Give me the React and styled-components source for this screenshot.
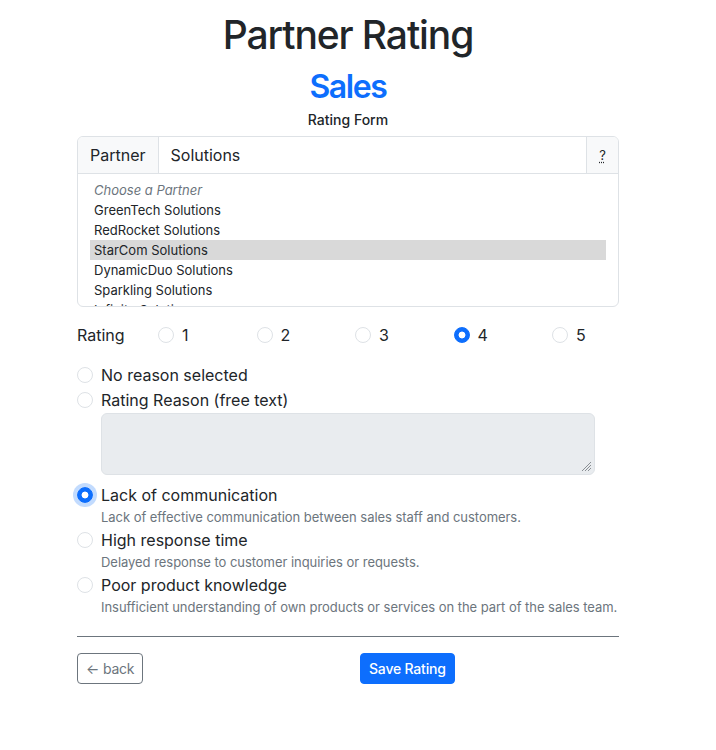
import React from "react";
import styled, { createGlobalStyle } from "styled-components";

const GlobalStyle = createGlobalStyle`
  body {
    margin: 0;
    background: #fff;
    color: #212529;
    font-family: Inter, "Noto Sans", "Liberation Sans", sans-serif;
  }
`;

const Page = styled.div`
  width: 542px;
  padding: 11px 0 40px 77px;
`;

const Title = styled.h1`
  margin: 0;
  text-align: center;
  font-size: 39px;
  font-weight: 500;
  line-height: 48px;
  letter-spacing: -1.1px;
`;

const Subtitle = styled.h2`
  margin: 9px 0 0;
  text-align: center;
  font-size: 32px;
  font-weight: 600;
  line-height: 38px;
  letter-spacing: -1.4px;
  color: #0d6efd;
`;

const FormTitle = styled.div`
  margin-top: 5px;
  text-align: center;
  font-size: 14px;
  font-weight: 500;
  line-height: 18px;
`;

const PartnerBox = styled.div`
  margin-top: 7px;
  border: 1px solid #dee2e6;
  border-radius: 6px;
  overflow: hidden;
`;

const SearchRow = styled.div`
  display: flex;
  height: 36px;
  border-bottom: 1px solid #dee2e6;
`;

const Addon = styled.span`
  display: flex;
  align-items: center;
  padding: 0 12px;
  background: #f8f9fa;
  border-right: 1px solid #dee2e6;
  font-size: 16px;
`;

const SearchInput = styled.div`
  flex: 1;
  display: flex;
  align-items: center;
  padding: 0 12px;
  font-size: 16px;
`;

const HelpButton = styled.span`
  width: 31px;
  display: flex;
  align-items: center;
  justify-content: center;
  background: #f8f9fa;
  border-left: 1px solid #dee2e6;
  font-size: 13px;

  abbr {
    text-decoration: underline dotted;
    text-underline-offset: 2px;
  }
`;

const OptionList = styled.div`
  height: 126px;
  overflow: hidden;
  padding: 6px 12px 0;
`;

const Option = styled.div`
  height: 20px;
  line-height: 20px;
  padding: 0 4px;
  font-size: 13px;
  color: ${(p) => (p.$placeholder ? "#6c757d" : "#212529")};
  font-style: ${(p) => (p.$placeholder ? "italic" : "normal")};
  background: ${(p) => (p.$selected ? "#d9d9d9" : "transparent")};
`;

const RatingRow = styled.div`
  margin-top: 16px;
  display: grid;
  grid-template-columns: 81px repeat(5, 98.5px);
  align-items: center;
  height: 24px;
  font-size: 16px;
`;

const Choice = styled.label`
  display: flex;
  align-items: center;
  gap: 8px;
  font-size: 16px;
  line-height: 24px;
`;

const Radio = styled.span`
  flex: none;
  box-sizing: border-box;
  width: 16px;
  height: 16px;
  border-radius: 50%;
  border: 1px solid ${(p) => (p.$checked ? "#0d6efd" : "#dee2e6")};
  background: ${(p) =>
    p.$checked
      ? "radial-gradient(circle, #fff 0 3.2px, #0d6efd 3.7px)"
      : "#fff"};
  box-shadow: ${(p) =>
    p.$focus ? "0 0 0 4px rgba(13, 110, 253, 0.25)" : "none"};
`;

const Reasons = styled.div`
  margin-top: 16px;
  display: flex;
  flex-direction: column;
`;

const ReasonItem = styled.div`
  display: flex;
  flex-direction: column;
  margin-bottom: ${(p) => p.$gap ?? 1}px;
`;

const Hint = styled.div`
  padding-left: 24px;
  font-size: 13px;
  line-height: 20px;
  letter-spacing: -0.04px;
  white-space: nowrap;
  color: #6c757d;
`;

const TextArea = styled.div`
  position: relative;
  margin: 1px 0 0 24px;
  width: 494px;
  height: 62px;
  box-sizing: border-box;
  background: #e9ecef;
  border: 1px solid #dee2e6;
  border-radius: 6px;
`;

const Grip = styled.svg`
  position: absolute;
  right: 2px;
  bottom: 2px;
`;

const Divider = styled.hr`
  margin: 18px 0 16px;
  border: 0;
  border-top: 1px solid #6c757d;
`;

const Actions = styled.div`
  display: grid;
  grid-template-columns: 1fr 1fr;
  column-gap: 24px;
`;

const Button = styled.button`
  justify-self: start;
  height: 31px;
  padding: 0 8px;
  border-radius: 4px;
  font-family: inherit;
  font-size: 14px;
  letter-spacing: -0.2px;
  font-weight: ${(p) => (p.$primary ? 500 : 400)};
  color: ${(p) => (p.$primary ? "#fff" : "#6c757d")};
  background: ${(p) => (p.$primary ? "#0d6efd" : "#fff")};
  border: 1px solid ${(p) => (p.$primary ? "#0d6efd" : "#6c757d")};
`;

const partners = [
  "GreenTech Solutions",
  "RedRocket Solutions",
  "StarCom Solutions",
  "DynamicDuo Solutions",
  "Sparkling Solutions",
  "Infinity Solutions",
];

const reasons = [
  {
    title: "Lack of communication",
    hint: "Lack of effective communication between sales staff and customers.",
    checked: true,
  },
  {
    title: "High response time",
    hint: "Delayed response to customer inquiries or requests.",
  },
  {
    title: "Poor product knowledge",
    hint: "Insufficient understanding of own products or services on the part of the sales team.",
  },
];

export default function App() {
  return (
    <>
      <GlobalStyle />
      <Page>
        <Title>Partner Rating</Title>
        <Subtitle>Sales</Subtitle>
        <FormTitle>Rating Form</FormTitle>

        <PartnerBox>
          <SearchRow>
            <Addon>Partner</Addon>
            <SearchInput>Solutions</SearchInput>
            <HelpButton>
              <abbr title="Type to filter partners">?</abbr>
            </HelpButton>
          </SearchRow>
          <OptionList>
            <Option $placeholder>Choose a Partner</Option>
            {partners.map((p) => (
              <Option key={p} $selected={p === "StarCom Solutions"}>
                {p}
              </Option>
            ))}
          </OptionList>
        </PartnerBox>

        <RatingRow>
          <span>Rating</span>
          {[1, 2, 3, 4, 5].map((n) => (
            <Choice key={n}>
              <Radio $checked={n === 4} />
              {n}
            </Choice>
          ))}
        </RatingRow>

        <Reasons>
          <ReasonItem>
            <Choice>
              <Radio />
              No reason selected
            </Choice>
          </ReasonItem>
          <ReasonItem $gap={8}>
            <Choice>
              <Radio />
              Rating Reason (free text)
            </Choice>
            <TextArea>
              <Grip width="11" height="11" viewBox="0 0 11 11">
                <path
                  d="M10 1 L1 10 M10 4 L4 10 M10 7 L7 10"
                  stroke="#8a8f94"
                  strokeWidth="1"
                />
              </Grip>
            </TextArea>
          </ReasonItem>
          {reasons.map((r) => (
            <ReasonItem key={r.title}>
              <Choice>
                <Radio $checked={r.checked} $focus={r.checked} />
                {r.title}
              </Choice>
              <Hint>{r.hint}</Hint>
            </ReasonItem>
          ))}
        </Reasons>

        <Divider />

        <Actions>
          <Button>← back</Button>
          <Button $primary>Save Rating</Button>
        </Actions>
      </Page>
    </>
  );
}
